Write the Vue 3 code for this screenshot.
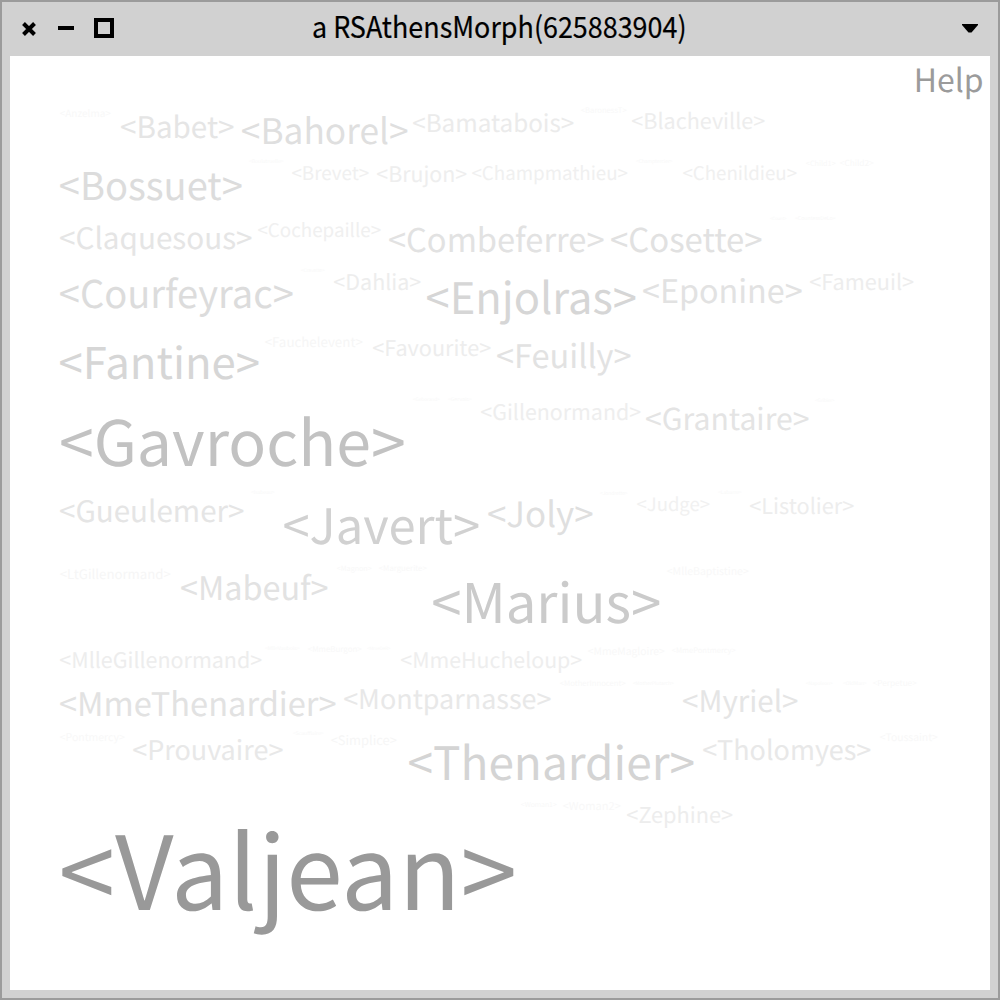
<script setup>
const FAMILY = '"Noto Sans CJK SC", "Noto Sans", sans-serif'

// name, left edge, right edge, baseline
const names = [
  ['Anzelma', 60, 111, 117], ['Babet', 121, 234, 138], ['Bahorel', 242, 408, 144],
  ['Bamatabois', 413, 574, 132], ['BaronessT', 581, 627, 113], ['Blacheville', 632, 765, 129],

  ['Bossuet', 60, 242, 199.5], ['Boulatruelle', 249, 284, 163], ['Brevet', 292, 369, 180],
  ['Brujon', 377, 467, 182], ['Champmathieu', 472, 628, 180], ['Champtercier', 636, 673, 163],
  ['Chenildieu', 683, 797, 180], ['Child1', 806, 836, 166], ['Child2', 840, 874, 166],

  ['Claquesous', 60, 252, 249], ['Cochepaille', 258, 381, 237], ['Combeferre', 389, 604, 252],
  ['Cosette', 611, 762, 252], ['Count', 770, 787, 220], ['CountessDeLo', 795, 836, 220],

  ['Courfeyrac', 60, 293, 308], ['Cravatte', 301, 325, 272], ['Dahlia', 334, 421, 290],
  ['Enjolras', 427, 636, 314], ['Eponine', 643, 802, 303], ['Fameuil', 810, 914, 290],

  ['Fantine', 60, 259, 379], ['Fauchelevent', 265, 363, 347], ['Favourite', 373, 491, 355.5],
  ['Feuilly', 497, 631, 368],

  ['Gavroche', 61, 404, 466], ['Geborand', 413, 440, 401], ['Gervais', 448, 472, 401],
  ['Gillenormand', 481, 641, 420], ['Grantaire', 646, 809, 430], ['Gribier', 815, 835, 402],

  ['Gueulemer', 60, 244, 522], ['Isabeau', 251, 275, 494], ['Javert', 284, 479, 543.5],
  ['Joly', 488, 593, 527], ['Jondrette', 600, 628, 495], ['Judge', 637, 710, 511],
  ['Labarre', 718, 742, 494], ['Listolier', 750, 854, 513.5],

  ['LtGillenormand', 60, 171, 578.5], ['Mabeuf', 181, 328, 600], ['Magnon', 337, 372, 571],
  ['Marguerite', 379, 427, 571], ['Marius', 433, 660, 623], ['MlleBaptistine', 667, 749, 575],

  ['MlleGillenormand', 60, 262, 668], ['MlleVaubois', 265, 300, 650], ['MmeBurgon', 308, 362, 652],
  ['MmeDeR', 367, 391, 650], ['MmeHucheloup', 401, 582, 668], ['MmeMagloire', 588, 665, 655],
  ['MmePontmercy', 672, 736, 653],

  ['MmeThenardier', 60, 336, 715.5], ['Montparnasse', 344, 551, 709], ['MotherInnocent', 560, 626, 686],
  ['MotherPlutarch', 633, 674, 685], ['Myriel', 683, 798, 712], ['Napoleon', 806, 833, 685],
  ['OldMan', 843, 867, 685], ['Perpetue', 873, 917, 686],

  ['Pontmercy', 60, 125, 741], ['Prouvaire', 133, 283, 760], ['Scaufflaire', 293, 324, 735],
  ['Simplice', 331, 397, 744.5], ['Thenardier', 409, 694, 780], ['Tholomyes', 703, 871, 760],
  ['Toussaint', 880, 938, 741],

  ['Valjean', 62, 514, 909.7], ['Woman1', 521, 557, 807], ['Woman2', 563, 621, 810],
  ['Zephine', 627, 733, 822.7],
]

const ctx = document.createElement('canvas').getContext('2d')
ctx.font = `200px ${FAMILY}`

// Finds the font size at which a text spans from left to right
function fit(text, left, right, y, color) {
  const m = ctx.measureText(text)
  const inkLeft = -m.actualBoundingBoxLeft / 200
  const inkWidth = m.actualBoundingBoxRight / 200 - inkLeft
  const size = (right - left) / inkWidth
  const gray = Math.min(248, Math.round(260 - 1.05 * size))
  return { text, x: left - inkLeft * size, y, size, color: color || `rgb(${gray}, ${gray}, ${gray})` }
}

const words = names.map(([name, left, right, y]) => fit(`<${name}>`, left + 0.1, right - 0.5, y + 0.2))
const help = fit('Help', 917, 982, 92, '#9b9b9b')
</script>

<template>
  <div class="window">
    <header class="titlebar">
      <div class="controls">
        <svg class="close" width="16" height="16" viewBox="0 0 16 16"><path d="M2.5 2.5 13.5 13.5M13.5 2.5 2.5 13.5" /></svg>
        <span class="minimize"></span>
        <span class="maximize"></span>
      </div>
      <svg class="title" width="380" height="54" viewBox="310 2 380 54">
        <text x="312" y="38" textLength="374.5" lengthAdjust="spacingAndGlyphs">a RSAthensMorph(625883904)</text>
      </svg>
      <svg class="menu" width="16" height="9" viewBox="0 0 16 9"><path d="M0 0H16V1L9.5 8.5H6.5L0 1Z" /></svg>
    </header>
    <main class="canvas">
      <svg width="980" height="934" viewBox="10 56 980 934">
        <text :x="help.x" :y="help.y" :font-size="help.size" :fill="help.color">{{ help.text }}</text>
        <text
          v-for="w in words"
          :key="w.text"
          :x="w.x"
          :y="w.y"
          :font-size="w.size"
          :fill="w.color"
        >{{ w.text }}</text>
      </svg>
    </main>
  </div>
</template>

<style>
body {
  margin: 0;
}
</style>

<style scoped>
.window {
  box-sizing: border-box;
  width: 1000px;
  height: 1000px;
  display: flex;
  flex-direction: column;
  padding: 0 8px 8px;
  border: 2px solid #9b9b9b;
  background: #d1d1d1;
  font-family: "Noto Sans CJK SC", "Noto Sans", sans-serif;
}
.titlebar {
  height: 54px;
  flex: none;
  display: flex;
  align-items: center;
  justify-content: space-between;
  padding: 0 12px 0 11px;
}
.controls {
  width: 289px;
  height: 20px;
  margin-bottom: 2px;
  display: flex;
  align-items: center;
}
.close {
  margin-top: 2px;
  margin-right: 21px;
  fill: none;
  stroke: #000;
  stroke-width: 4;
}
.minimize {
  width: 16px;
  height: 4px;
  margin-right: 20px;
  background: #000;
}
.maximize {
  box-sizing: border-box;
  width: 20px;
  height: 20px;
  border: 4px solid #000;
}
.title {
  flex: none;
  margin-right: auto;
  overflow: visible;
}
.title text {
  font-size: 29.5px;
  fill: #000;
  stroke: #000;
  stroke-width: 0.2px;
}
.menu {
  margin-bottom: 2px;
}
.canvas {
  flex: 1;
  background: #fff;
}
.canvas svg {
  display: block;
}
.canvas text {
  text-rendering: geometricPrecision;
}
</style>
